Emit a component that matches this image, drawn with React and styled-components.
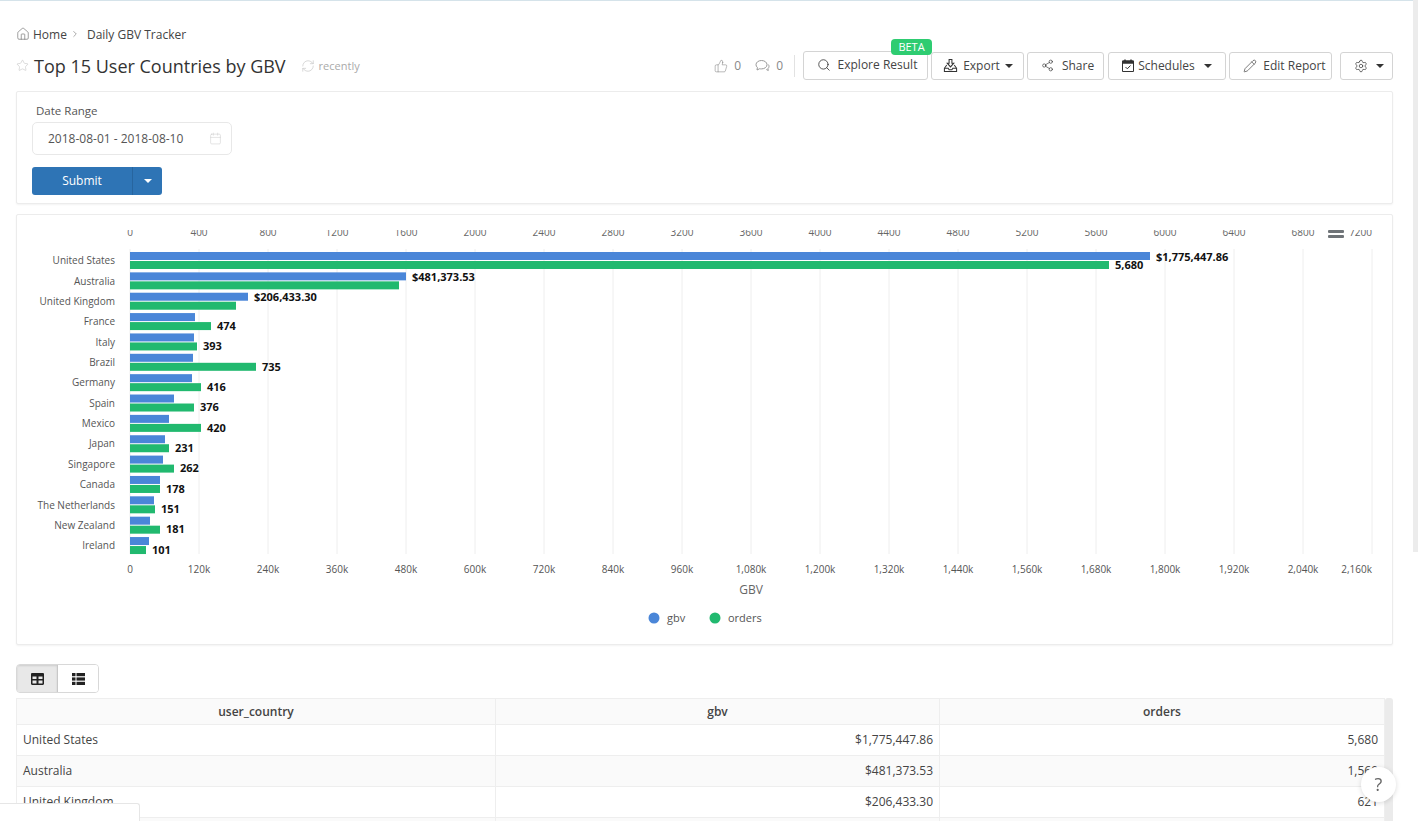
import React from "react";
import styled, { createGlobalStyle } from "styled-components";
import {
    Home,
    ChevronRight,
    Star,
    RefreshCw,
    ThumbsUp,
    Search,
    Share2,
    Pencil,
    Settings,
    Calendar
} from "lucide-react";

const GlobalStyle = createGlobalStyle`
    html, body {
        margin: 0;
        height: 821px;
        overflow: hidden;
        background: #fff;
    }
    body {
        font-family: "Open Sans", "Liberation Sans", sans-serif;
        font-size: 12px;
        color: #444;
    }
    * {
        box-sizing: border-box;
    }
`;

const Page = styled.div`
    height: 821px;
    overflow: hidden;
    padding: 25px 25px 0 16px;
    border-top: 1px solid #d5e3ea;
`;

const PageScroll = styled.div`
    position: fixed;
    top: 0;
    right: 0;
    width: 5px;
    height: 552px;
    background: #ececec;
`;

const Breadcrumb = styled.nav`
    display: flex;
    align-items: center;
    height: 16px;
    color: #444;
    svg {
        display: block;
        color: #777;
    }
`;

const Crumb = styled.span`
    margin-left: ${p => p.$gap || 3}px;
`;

const Header = styled.header`
    display: flex;
    align-items: center;
    justify-content: space-between;
    height: 29px;
    margin-top: 9px;
`;

const TitleGroup = styled.div`
    display: flex;
    align-items: center;
    color: #c9c9c9;
`;

const Title = styled.h1`
    margin: 0 15px 0 5px;
    font-size: 18px;
    font-weight: 400;
    color: #333;
`;

const Recently = styled.span`
    margin-left: 4px;
    font-size: 11px;
    color: #aaa;
`;

const Actions = styled.div`
    display: flex;
    align-items: center;
`;

const Counter = styled.span`
    display: flex;
    align-items: center;
    gap: 6px;
    margin-right: 14px;
    color: #888;
`;

const Divider = styled.span`
    width: 1px;
    height: 22px;
    margin: 0 8px 0 -3px;
    background: #e2e2e2;
`;

const Button = styled.button`
    position: relative;
    display: flex;
    align-items: center;
    justify-content: center;
    gap: ${p => p.$gap || 6}px;
    width: ${p => p.$w}px;
    height: ${p => p.$h || 28}px;
    margin-left: ${p => p.$ml || 0}px;
    padding: 0 0 ${p => p.$pb || 0}px ${p => p.$pl || 0}px;
    font: inherit;
    color: #444;
    background: #fff;
    border: 1px solid #d4d4d4;
    border-radius: 3px;
    svg {
        flex: none;
        color: #333;
    }
`;

const Beta = styled.span`
    position: absolute;
    top: -13px;
    right: -5px;
    width: 41px;
    height: 16px;
    font-size: 11px;
    line-height: 16px;
    text-align: center;
    color: #fff;
    background: #2ecc71;
    border-radius: 4px;
`;

const Caret = styled.i`
    width: 0;
    height: 0;
    margin-left: ${p => p.$ml || 0}px;
    border-top: 4px solid ${p => p.$color || "#333"};
    border-left: 4px solid transparent;
    border-right: 4px solid transparent;
`;

const Panel = styled.section`
    background: #fff;
    border: 1px solid #ececec;
    border-radius: 2px;
    box-shadow: 0 1px 2px rgba(0, 0, 0, 0.05);
`;

const FilterPanel = styled(Panel)`
    height: 113px;
    margin-top: 11px;
    padding: 10px 15px 0;
`;

const FieldLabel = styled.div`
    margin-left: 4px;
    font-size: 11.5px;
    line-height: 17px;
    font-weight: 500;
    color: #555;
`;

const DateInput = styled.div`
    display: flex;
    align-items: center;
    justify-content: space-between;
    width: 200px;
    height: 33px;
    margin-top: 3px;
    padding: 0 9px 0 15px;
    color: #555;
    border: 1px solid #e8e8e8;
    border-radius: 5px;
    svg {
        color: #ccc;
    }
`;

const SubmitGroup = styled.div`
    display: flex;
    width: 130px;
    height: 28px;
    margin-top: 12px;
    color: #fff;
    background: #2e74b5;
    border-radius: 3px;
`;

const SubmitLabel = styled.span`
    width: 101px;
    line-height: 28px;
    text-align: center;
    border-right: 1px solid #27659f;
`;

const SubmitCaret = styled.span`
    display: flex;
    flex: 1;
    align-items: center;
    justify-content: center;
`;

const ChartPanel = styled(Panel)`
    height: 431px;
    margin-top: 10px;
`;

const ChartSvg = styled.svg`
    display: block;
    width: 1375px;
    height: 429px;
    font-family: "Open Sans", "Liberation Sans", sans-serif;
`;

const ToggleGroup = styled.div`
    display: flex;
    width: 83px;
    height: 29px;
    margin-top: 19px;
    border: 1px solid #d8d8d8;
    border-radius: 4px;
    overflow: hidden;
`;

const Toggle = styled.span`
    display: flex;
    flex: 1;
    align-items: center;
    justify-content: center;
    background: ${p => (p.$active ? "#e8e8e8" : "#fff")};
    border-right: ${p => (p.$active ? "1px solid #c8c8c8" : "none")};
    box-shadow: ${p => (p.$active ? "inset 0 1px 2px rgba(0, 0, 0, 0.12)" : "none")};
`;

const TableWrap = styled.div`
    display: flex;
    margin-top: 5px;
`;

const Table = styled.table`
    width: 1368px;
    flex: none;
    table-layout: fixed;
    border-collapse: collapse;
    border-top: 1px solid #eee;
    border-left: 1px solid #eee;
`;

const Th = styled.th`
    height: 26px;
    padding: 0 7px;
    font-weight: 600;
    font-size: 12px;
    color: #444;
    background: #fafafa;
    border: 1px solid #eee;
    border-top: 0;
    border-left: 0;
`;

const Td = styled.td`
    height: 31px;
    padding: 0 6px 2px 6px;
    text-align: ${p => (p.$right ? "right" : "left")};
    color: #444;
    background: ${p => (p.$odd ? "#fafafa" : "#fff")};
    border-right: 1px solid #eee;
    border-bottom: 1px solid #eee;
`;

const TableScroll = styled.div`
    flex: none;
    width: 8px;
    height: 125px;
    background: #ebebeb;
    border-radius: 3px 3px 0 0;
`;

const BottomTab = styled.div`
    position: fixed;
    left: 0;
    bottom: 0;
    width: 140px;
    height: 18px;
    background: #fff;
    border: 1px solid #e6e6e6;
    border-left: 0;
    border-bottom: 0;
    border-radius: 0 3px 0 0;
`;

const HelpButton = styled.div`
    position: fixed;
    left: 1361px;
    top: 767px;
    width: 35px;
    height: 35px;
    font-size: 18px;
    line-height: 35px;
    text-align: center;
    color: #666;
    background: #fff;
    border-radius: 50%;
    box-shadow: 0 1px 5px rgba(0, 0, 0, 0.15);
`;

const X0 = 130;
const STEP = 69;
const ROW = 20.36;
const BLUE = "#4a86d8";
const GREEN = "#21b96f";

// bar ends are read off the picture, in page pixels
const rows = [
    { name: "United States", gbvEnd: 1150, ordersEnd: 1109, gbv: "$1,775,447.86", orders: "5,680" },
    { name: "Australia", gbvEnd: 406, ordersEnd: 399, gbv: "$481,373.53" },
    { name: "United Kingdom", gbvEnd: 248, ordersEnd: 236, gbv: "$206,433.30" },
    { name: "France", gbvEnd: 195, ordersEnd: 211, orders: "474" },
    { name: "Italy", gbvEnd: 194, ordersEnd: 197, orders: "393" },
    { name: "Brazil", gbvEnd: 193, ordersEnd: 256, orders: "735" },
    { name: "Germany", gbvEnd: 192, ordersEnd: 201, orders: "416" },
    { name: "Spain", gbvEnd: 174, ordersEnd: 194, orders: "376" },
    { name: "Mexico", gbvEnd: 169, ordersEnd: 201, orders: "420" },
    { name: "Japan", gbvEnd: 165, ordersEnd: 169, orders: "231" },
    { name: "Singapore", gbvEnd: 163, ordersEnd: 174, orders: "262" },
    { name: "Canada", gbvEnd: 160, ordersEnd: 160, orders: "178" },
    { name: "The Netherlands", gbvEnd: 154, ordersEnd: 155, orders: "151" },
    { name: "New Zealand", gbvEnd: 150, ordersEnd: 160, orders: "181" },
    { name: "Ireland", gbvEnd: 149, ordersEnd: 146, orders: "101" }
];

const bottomTicks = [
    "0", "120k", "240k", "360k", "480k", "600k", "720k", "840k", "960k", "1,080k",
    "1,200k", "1,320k", "1,440k", "1,560k", "1,680k", "1,800k", "1,920k", "2,040k", "2,160k"
];

const tableRows = [
    ["United States", "$1,775,447.86", "5,680"],
    ["Australia", "$481,373.53", "1,560"],
    ["United Kingdom", "$206,433.30", "621"],
    ["France", "$113,000.00", "474"]
];

const Chart = () => (
    <ChartSvg viewBox="17 215 1375 429">
        <defs>
            <clipPath id="top-axis">
                <rect x="100" y="230" width="1290" height="10" />
            </clipPath>
        </defs>
        {bottomTicks.map((tick, i) => {
            const last = i === bottomTicks.length - 1;
            const anchor = last ? "end" : "middle";
            return (
                <g key={tick}>
                    <line x1={X0 + i * STEP} x2={X0 + i * STEP} y1={249} y2={554} stroke="#eee" />
                    <text x={X0 + i * STEP} y={573} fontSize="10" fill="#555" textAnchor={anchor}>
                        {tick}
                    </text>
                    <text
                        x={X0 + i * STEP}
                        y={236}
                        fontSize="10"
                        fill="#666"
                        textAnchor={anchor}
                        clipPath="url(#top-axis)"
                    >
                        {i * 400}
                    </text>
                </g>
            );
        })}
        <rect x="1328" y="230" width="16" height="3" rx="1" fill="#6f7478" />
        <rect x="1328" y="235" width="16" height="3" rx="1" fill="#6f7478" />
        {rows.map((row, i) => {
            const y = 252 + i * ROW;
            return (
                <g key={row.name}>
                    <text x={115} y={y + 12.2} fontSize="10" fill="#555" textAnchor="end">
                        {row.name}
                    </text>
                    <rect x={X0} y={y} width={row.gbvEnd - X0} height={8} fill={BLUE} />
                    <rect x={X0} y={y + 9} width={row.ordersEnd - X0} height={8} fill={GREEN} />
                    {row.gbv && (
                        <text x={row.gbvEnd + 6} y={y + 8.5} fontSize="11" fontWeight="700" fill="#111">
                            {row.gbv}
                        </text>
                    )}
                    {row.orders && (
                        <text x={row.ordersEnd + 6} y={y + 16.8} fontSize="11" fontWeight="700" fill="#111">
                            {row.orders}
                        </text>
                    )}
                </g>
            );
        })}
        <text x="751" y="594" fontSize="12" fill="#666" textAnchor="middle">GBV</text>
        <circle cx="654" cy="618" r="5.5" fill={BLUE} />
        <text x="667" y="622" fontSize="11" fill="#555">gbv</text>
        <circle cx="715" cy="618" r="5.5" fill={GREEN} />
        <text x="728" y="622" fontSize="11" fill="#555">orders</text>
    </ChartSvg>
);

const CommentIcon = () => (
    <svg width="15" height="14" viewBox="0 0 15 14" fill="none" stroke="#999" strokeWidth="1">
        <path d="M6.500 1.500c-3 0-5.500 1.800-5.500 4.200 0 1.100.5 2 1.400 2.800L2 11l2.700-1.300c.6.200 1.200.2 1.800.2 3 0 5.500-1.800 5.500-4.200S9.500 1.500 6.500 1.500z" />
        <path d="M13.300 5.500c.5.600.7 1.200.7 1.900 0 .9-.4 1.700-1.100 2.300l.4 1.800-2-1" />
    </svg>
);

const ExportIcon = () => (
    <svg width="15" height="15" viewBox="0 0 16 16" fill="none" stroke="#333" strokeWidth="1.100">
        <path d="M6.500 1.500h3v4h2L8 9.500 4.500 5.500h2z" />
        <path d="M4 7.500 1.500 11v3.500h13V11L12 7.500" />
        <path d="M1.500 11h4l1 1.500h3l1-1.500h4" />
    </svg>
);

const ScheduleIcon = () => (
    <svg width="12" height="13" viewBox="0 0 12 13" fill="none" stroke="#333" strokeWidth="1">
        <path d="M3 .5v2M9 .5v2" strokeWidth="1.500" />
        <path d="M.5 2h11v10.500H.5z" />
        <path d="M.5 2h11v2.200H.5z" fill="#333" />
        <path d="m3.500 8 1.800 1.800 3.200-3.300" />
    </svg>
);

const TableIcon = () => (
    <svg width="13" height="12" viewBox="0 0 13 12" fill="#222">
        <path d="M1.200 0h10.600C12.500 0 13 .5 13 1.200v9.600c0 .7-.5 1.200-1.200 1.200H1.200C.5 12 0 11.500 0 10.800V1.200C0 .5.500 0 1.200 0zM1.500 3.500V6h4V3.500zm6 0V6h4V3.500zm-6 4v3h4v-3zm6 0v3h4v-3z" fillRule="evenodd" />
    </svg>
);

const ListIcon = () => (
    <svg width="13" height="12" viewBox="0 0 13 12" fill="#222">
        <rect x="0" y="0" width="3.500" height="3.200" />
        <rect x="4.500" y="0" width="8.500" height="3.200" />
        <rect x="0" y="4.400" width="3.500" height="3.200" />
        <rect x="4.500" y="4.400" width="8.500" height="3.200" />
        <rect x="0" y="8.800" width="3.500" height="3.200" />
        <rect x="4.500" y="8.800" width="8.500" height="3.200" />
    </svg>
);

export default function App() {
    return (
        <Page>
            <GlobalStyle />
            <Breadcrumb>
                <Home size={14} strokeWidth={1.2} />
                <Crumb>Home</Crumb>
                <Crumb $gap={3}>
                    <ChevronRight size={10} strokeWidth={1.5} />
                </Crumb>
                <Crumb $gap={7}>Daily GBV Tracker</Crumb>
            </Breadcrumb>
            <Header>
                <TitleGroup>
                    <Star size={13} strokeWidth={1.2} />
                    <Title>Top 15 User Countries by GBV</Title>
                    <RefreshCw size={14} strokeWidth={1.2} />
                    <Recently>recently</Recently>
                </TitleGroup>
                <Actions>
                    <Counter>
                        <ThumbsUp size={14} strokeWidth={1} /> 0
                    </Counter>
                    <Counter>
                        <CommentIcon /> 0
                    </Counter>
                    <Divider />
                    <Button $w={125} $h={29} $gap={7} $pl={3} $pb={2}>
                        <Search size={14} strokeWidth={1.4} />
                        Explore Result
                        <Beta>BETA</Beta>
                    </Button>
                    <Button $w={93} $ml={3} $gap={5} $pl={1}>
                        <ExportIcon />
                        Export
                        <Caret />
                    </Button>
                    <Button $w={77} $ml={3} $gap={8} $pl={4}>
                        <Share2 size={13} strokeWidth={1.2} />
                        Share
                    </Button>
                    <Button $w={118} $ml={4} $gap={4}>
                        <ScheduleIcon />
                        Schedules
                        <Caret $ml={5} />
                    </Button>
                    <Button $w={103} $ml={3} $gap={6} $pl={8}>
                        <Pencil size={14} strokeWidth={1.1} />
                        Edit Report
                    </Button>
                    <Button $w={53} $ml={8} $gap={8} $pl={4}>
                        <Settings size={14} strokeWidth={1.2} />
                        <Caret />
                    </Button>
                </Actions>
            </Header>
            <FilterPanel>
                <FieldLabel>Date Range</FieldLabel>
                <DateInput>
                    2018-08-01 - 2018-08-10
                    <Calendar size={13} strokeWidth={1} />
                </DateInput>
                <SubmitGroup>
                    <SubmitLabel>Submit</SubmitLabel>
                    <SubmitCaret>
                        <Caret $color="#fff" />
                    </SubmitCaret>
                </SubmitGroup>
            </FilterPanel>
            <ChartPanel>
                <Chart />
            </ChartPanel>
            <ToggleGroup>
                <Toggle $active>
                    <TableIcon />
                </Toggle>
                <Toggle>
                    <ListIcon />
                </Toggle>
            </ToggleGroup>
            <TableWrap>
                <Table>
                    <colgroup>
                        <col width="479" />
                        <col width="444" />
                        <col width="445" />
                    </colgroup>
                    <thead>
                        <tr>
                            <Th>user_country</Th>
                            <Th>gbv</Th>
                            <Th>orders</Th>
                        </tr>
                    </thead>
                    <tbody>
                        {tableRows.map((cells, i) => (
                            <tr key={cells[0]}>
                                <Td $odd={i % 2 === 1}>{cells[0]}</Td>
                                <Td $odd={i % 2 === 1} $right>{cells[1]}</Td>
                                <Td $odd={i % 2 === 1} $right>{cells[2]}</Td>
                            </tr>
                        ))}
                    </tbody>
                </Table>
                <TableScroll />
            </TableWrap>
            <PageScroll />
            <BottomTab />
            <HelpButton>?</HelpButton>
        </Page>
    );
}
